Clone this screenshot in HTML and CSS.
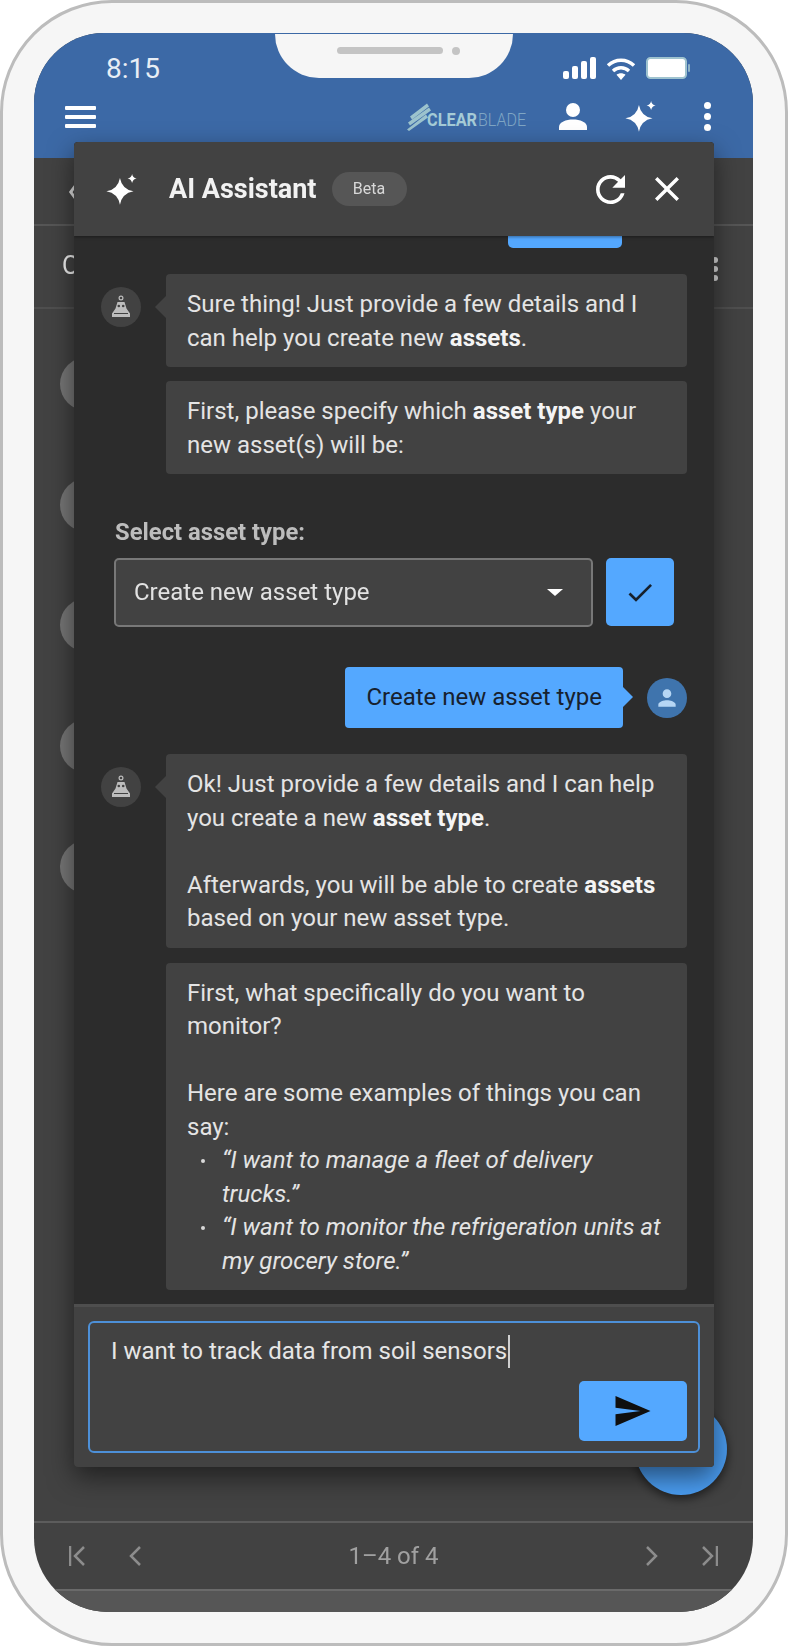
FILE: index.html
```html
<!DOCTYPE html>
<html lang="en">
<head>
<meta charset="utf-8">
<title>AI Assistant</title>
<link rel="stylesheet" href="styles.css">
</head>
<body>
<div class="phone">
  <div class="screen">
    <header class="appbar">
      <div class="status">
        <span class="time">8:15</span>
        <div class="status-icons">
          <svg class="ic-signal" viewBox="0 0 33 22"><rect x="0" y="14" width="6" height="8" rx="2"/><rect x="9" y="9" width="6" height="13" rx="2"/><rect x="18" y="4" width="6" height="18" rx="2"/><rect x="27" y="0" width="6" height="22" rx="2"/></svg>
          <svg class="ic-wifi" viewBox="0 0 30 23"><path class="wifi-arc" d="M2 8.500c7.500-7 18.500-7 26 0M7 14c4.700-4.200 11.300-4.200 16 0"/><path class="wifi-dot" d="M15 23l-4.500-5.200c2.700-2 6.300-2 9 0z"/></svg>
          <svg class="ic-battery" viewBox="0 0 44 22"><rect class="bat-shell" x="1" y="1" width="39" height="20" rx="3.500"/><rect class="bat-cap" x="42" y="7" width="2" height="8" rx="1"/></svg>
        </div>
      </div>
      <div class="toolbar">
        <div class="hamburger"><i></i><i></i><i></i></div>
        <div class="toolbar-right">
          <svg class="logo" viewBox="0 0 120 28"><path class="logo-mark" d="M3 14 20 1l2 3L5 17zM1 20 22 5l2 3L3 23zM0 27 19 12l2 3L2 28.500z"/><text class="logo-a" x="20" y="23" textLength="50" lengthAdjust="spacingAndGlyphs">CLEAR</text><text class="logo-b" x="71" y="23" textLength="48" lengthAdjust="spacingAndGlyphs">BLADE</text></svg>
          <svg class="ic-person" viewBox="0 0 28 27"><circle cx="14" cy="7" r="7"/><path d="M0 27v-3c0-5 7-7.500 14-7.500S28 19 28 24v3z"/></svg>
          <svg class="ic-spark" viewBox="0 0 24 24"><path d="M10.800 3Q12.400 11.800 21.300 13.400 12.400 15 10.800 23.800 9.200 15 .3 13.400 9.200 11.800 10.800 3zM20.200 0Q20.700 2.800 23.700 3.500 20.700 4.200 20.200 7 19.700 4.200 16.700 3.500 19.700 2.800 20.200 0z"/></svg>
          <div class="kebab"><i></i><i></i><i></i></div>
        </div>
      </div>
    </header>
    <div class="subheader"><span class="back">‹</span></div>
    <div class="listhead"><span class="listhead-title">Overview</span><div class="kebab kebab-dim"><i></i><i></i><i></i></div></div>
    <div class="list">
      <div class="row"><span class="disc"></span></div>
      <div class="row"><span class="disc"></span></div>
      <div class="row"><span class="disc"></span></div>
      <div class="row"><span class="disc"></span></div>
      <div class="row"><span class="disc"></span></div>
    </div>
    <div class="paginator">
      <div class="pager-group">
        <svg class="ic-page" viewBox="0 0 24 20"><path d="M1 0v20M15 1 6 10l9 9"/></svg>
        <svg class="ic-page ic-narrow" viewBox="0 0 14 20"><path d="M12 1 3 10l9 9"/></svg>
      </div>
      <span class="pager-text">1–4 of 4</span>
      <div class="pager-group">
        <svg class="ic-page ic-narrow" viewBox="0 0 14 20"><path d="M2 1l9 9-9 9"/></svg>
        <svg class="ic-page" viewBox="0 0 24 20"><path d="M23 0v20M9 1l9 9-9 9"/></svg>
      </div>
    </div>
    <div class="footer"></div>
  </div>

  <div class="notch"><span class="speaker"></span><span class="camera"></span></div>
  <span class="fab"></span>

  <section class="modal">
    <div class="modal-head">
      <svg class="ic-spark" viewBox="0 0 24 24"><path d="M10.800 3Q12.400 11.800 21.300 13.400 12.400 15 10.800 23.800 9.200 15 .3 13.400 9.200 11.800 10.800 3zM20.200 0Q20.700 2.800 23.700 3.500 20.700 4.200 20.200 7 19.700 4.200 16.700 3.500 19.700 2.800 20.200 0z"/></svg>
      <h1 class="modal-title">AI Assistant</h1>
      <span class="beta">Beta</span>
      <svg class="ic-refresh" viewBox="4 4 16 16"><path d="M17.650 6.350C16.200 4.900 14.210 4 12 4c-4.420 0-7.990 3.580-7.990 8s3.570 8 7.990 8c3.730 0 6.840-2.550 7.730-6h-2.080c-.82 2.330-3.040 4-5.650 4-3.310 0-6-2.690-6-6s2.690-6 6-6c1.660 0 3.140.69 4.220 1.780L13 11h7V4l-2.350 2.350z"/></svg>
      <svg class="ic-close" viewBox="5 5 14 14"><path d="M19 6.410 17.590 5 12 10.590 6.410 5 5 6.410 10.590 12 5 17.590 6.410 19 12 13.410 17.590 19 19 17.590 13.410 12z"/></svg>
    </div>

    <div class="chat">
      <div class="stub"></div>

      <div class="msg msg-first">
        <span class="avatar"><svg class="ic-bot" viewBox="0 0 24 24"><circle class="bot-top" cx="12" cy="3" r="1.900"/><path d="M8.500 7h7l2 6.500 3.500 5V22H3v-3.500l3.500-5z"/><circle class="bot-eye" cx="9.800" cy="11" r="1.300"/><circle class="bot-eye" cx="14.200" cy="11" r="1.300"/><rect class="bot-eye" x="5" y="18" width="14" height="1"/></svg></span>
        <div class="stack">
          <div class="bubble bubble-tail">Sure thing! Just provide a few details and I can help you create new <b>assets</b>.</div>
          <div class="bubble">First, please specify which <b>asset type</b> your new asset(s) will be:</div>
        </div>
      </div>

      <div class="picker">
        <div class="picker-label">Select asset type:</div>
        <div class="picker-row">
          <div class="select"><span>Create new asset type</span><i class="caret-down"></i></div>
          <button class="confirm"><svg class="ic-check" viewBox="3 5 18 14"><path d="M9 16.170 4.830 12l-1.420 1.410L9 19 21 7l-1.410-1.410z"/></svg></button>
        </div>
      </div>

      <div class="msg msg-user">
        <div class="bubble-user">Create new asset type</div>
        <span class="avatar avatar-user"><svg class="ic-user" viewBox="0 0 24 24"><path d="M12 12c2.210 0 4-1.790 4-4s-1.790-4-4-4-4 1.790-4 4 1.790 4 4 4zm0 2c-2.670 0-8 1.340-8 4v2h16v-2c0-2.660-5.330-4-8-4z"/></svg></span>
      </div>

      <div class="msg msg-bot2">
        <span class="avatar"><svg class="ic-bot" viewBox="0 0 24 24"><circle class="bot-top" cx="12" cy="3" r="1.900"/><path d="M8.500 7h7l2 6.500 3.500 5V22H3v-3.500l3.500-5z"/><circle class="bot-eye" cx="9.800" cy="11" r="1.300"/><circle class="bot-eye" cx="14.200" cy="11" r="1.300"/><rect class="bot-eye" x="5" y="18" width="14" height="1"/></svg></span>
        <div class="stack">
          <div class="bubble bubble-tail">
            <p>Ok! Just provide a few details and I can help you create a new <b>asset type</b>.</p>
            <p class="para">Afterwards, you will be able to create <b>assets</b> based on your new asset type.</p>
          </div>
          <div class="bubble">
            <p>First, what specifically do you want to monitor?</p>
            <p class="para">Here are some examples of things you can say:</p>
            <ul class="examples">
              <li>“I want to manage a fleet of delivery trucks.”</li>
              <li>“I want to monitor the refrigeration units at my grocery store.”</li>
            </ul>
          </div>
        </div>
      </div>
    </div>

    <div class="composer">
      <div class="input">
        <div class="input-text">I want to track data from soil sensors<span class="text-caret"></span></div>
        <button class="send"><svg class="ic-send" viewBox="2 3 21 18"><path d="M2.010 21 23 12 2.010 3 2 10l15 2-15 2z"/></svg></button>
      </div>
    </div>
  </section>
</div>
</body>
</html>
```
FILE: styles.css
```css
* { box-sizing: border-box; }
html, body { margin: 0; padding: 0; background: #fff; }
body { font-family: Roboto, "Liberation Sans", sans-serif; color: #e2e2e2; }

.phone {
  position: relative;
  width: 788px;
  height: 1646px;
  padding: 30px 32px 31px 31px;
  background: #f6f6f6;
  border: 3px solid #bcbcbc;
  border-radius: 112px;
  overflow: hidden;
  filter: blur(.4px);
}
.screen {
  display: flex;
  flex-direction: column;
  height: 100%;
  background: #424242;
  border-radius: 70px 70px 74px 74px;
  overflow: hidden;
}

/* app bar */
.appbar { flex: 0 0 125px; background: #3c69a6; }
.status { height: 60px; display: flex; justify-content: space-between; padding: 18px 63px 0 72px; }
.time { font-size: 28px; line-height: 36px; color: #e8eef5; }
.status-icons { display: flex; gap: 10px; align-items: flex-start; padding-top: 6px; }
.ic-signal { width: 33px; height: 22px; fill: #fff; }
.ic-wifi { width: 30px; height: 23px; }
.wifi-arc { fill: none; stroke: #fff; stroke-width: 3.500; }
.wifi-dot { fill: #fff; }
.ic-battery { width: 44px; height: 22px; }
.bat-shell { fill: #fff; stroke: #9fc3cf; stroke-width: 2; }
.bat-cap { fill: #8fb3c6; }

.toolbar { height: 47px; display: flex; justify-content: space-between; align-items: center; padding: 0 42px 0 31px; }
.hamburger { display: flex; flex-direction: column; gap: 5px; width: 31px; }
.hamburger i { display: block; height: 4px; background: #fff; border-radius: 1px; }
.toolbar-right { display: flex; align-items: center; }
.logo { width: 120px; height: 29px; margin-right: 32px; overflow: visible; }
.logo-mark { fill: #9cc3cd; }
.logo-a { font: 700 18px Roboto, sans-serif; fill: #a5cbd6; }
.logo-b { font: 300 18px Roboto, sans-serif; fill: #7fa6c4; }
.ic-person { width: 28px; height: 27px; fill: #fff; margin-right: 38px; }
.ic-spark { width: 31px; height: 31px; fill: #fff; }
.kebab { display: flex; flex-direction: column; gap: 4px; width: 7px; margin-left: 48px; }
.kebab i { display: block; width: 7px; height: 7px; border-radius: 50%; background: #fff; }

/* page behind the dialog */
.subheader { flex: 0 0 68px; border-bottom: 2px solid #565656; padding: 12px 0 0 33px; }
.back { font-size: 40px; line-height: 40px; color: #ddd; }
.listhead { flex: 0 0 83px; border-bottom: 2px solid #4f4f4f; display: flex; justify-content: space-between; padding: 20px 35px 0 28px; }
.listhead-title { font-size: 25px; line-height: 40px; color: #efefef; }
.kebab-dim { gap: 3px; width: 6px; margin: 11px 0 0; }
.kebab-dim i { width: 6px; height: 6px; background: #d8d8d8; }
.list { flex: 1 1 auto; padding-top: 15px; }
.row { height: 120.600px; display: flex; align-items: center; padding-left: 26px; }
.disc { width: 54px; height: 54px; border-radius: 50%; background: #757575; }

.paginator {
  flex: 0 0 70px;
  display: flex;
  align-items: center;
  justify-content: space-between;
  padding: 0 35px;
  border-top: 2px solid #5c5c5c;
  border-bottom: 2px solid #6a6a6a;
}
.pager-group { display: flex; align-items: center; gap: 35px; }
.pager-text { font-size: 24px; color: #a0a0a0; }
.ic-page { width: 24px; height: 20px; fill: none; stroke: #8c8c8c; stroke-width: 2.500; }
.ic-narrow { width: 14px; }
.footer { flex: 0 0 21px; background: #565656; }

/* overlays */
.notch {
  position: absolute;
  left: 272px;
  top: 31px;
  width: 238px;
  height: 44px;
  background: #f6f6f6;
  border-radius: 0 0 44px 44px;
}
.speaker { position: absolute; left: 62px; top: 13px; width: 106px; height: 7px; border-radius: 4px; background: #c4c4c4; }
.camera { position: absolute; left: 177px; top: 13px; width: 8px; height: 8px; border-radius: 50%; background: #c4c4c4; }
.fab {
  position: absolute;
  left: 632px;
  top: 1400px;
  width: 92px;
  height: 92px;
  border-radius: 50%;
  background: #4a9cf0;
  box-shadow: 0 4px 10px rgba(0,0,0,.5);
}

.modal {
  position: absolute;
  left: 71px;
  top: 139px;
  width: 640px;
  height: 1325px;
  display: flex;
  flex-direction: column;
  background: #2c2c2c;
  border-radius: 4px;
  overflow: hidden;
  box-shadow: 0 10px 26px rgba(0,0,0,.5);
}
.modal-head {
  flex: 0 0 94px;
  display: flex;
  align-items: center;
  padding: 0 35px 0 32px;
  background: #424242;
  box-shadow: 0 1px 3px rgba(0,0,0,.4);
  position: relative;
}
.modal-title { margin: 0 0 0 32px; font-size: 27px; font-weight: 700; color: #f2f2f2; white-space: nowrap; }
.beta { margin-left: 15px; width: 75px; height: 34px; border-radius: 17px; background: #565656; color: #d8d8d8; font-size: 16px; line-height: 34px; text-align: center; }
.ic-refresh { width: 29px; height: 29px; fill: #fff; margin-left: auto; }
.ic-close { width: 24px; height: 24px; fill: #fff; margin-left: 30px; }

/* chat */
.chat { flex: 1 1 auto; padding: 0 27px; font-size: 24px; line-height: 33.500px; overflow: hidden; }
.stub { width: 114px; height: 12px; margin-left: 407px; background: #54a8ff; border-radius: 0 0 5px 5px; }
.msg { display: flex; align-items: flex-start; }
.msg-first { margin-top: 26px; }
.msg-user { margin-top: 40px; justify-content: flex-end; align-items: center; }
.msg-bot2 { margin-top: 26px; }
.avatar { flex: 0 0 40px; width: 40px; height: 40px; margin-top: 13px; border-radius: 50%; background: #424242; display: flex; align-items: center; justify-content: center; }
.ic-bot { width: 24px; height: 24px; fill: #bdbdbd; }
.bot-top { fill: none; stroke: #bdbdbd; stroke-width: 1.200; }
.bot-eye { fill: #424242; }
.stack { flex: 1 1 auto; margin-left: 25px; display: flex; flex-direction: column; gap: 14px; }
.msg-bot2 .stack { gap: 15px; }
.bubble { position: relative; padding: 14px 21px 12px; background: #424242; border-radius: 4px; color: #e4e4e4; }
.bubble-tail::before {
  content: "";
  position: absolute;
  left: -11px;
  top: 22px;
  border-style: solid;
  border-width: 11px 11px 11px 0;
  border-color: transparent #424242 transparent transparent;
}
.bubble b { color: #f4f4f4; }
.bubble p { margin: 0; }
.bubble .para { margin-top: 33.500px; }
.examples { margin: 0; padding: 0 0 0 35px; font-style: italic; list-style: none; }
.examples li { position: relative; }
.examples li::before { content: ""; position: absolute; left: -21px; top: 15px; width: 4px; height: 4px; border-radius: 50%; background: #d8d8d8; }

.picker { margin: 46px 13px 0; }
.picker-label { font-size: 24px; font-size: 23.800px; font-weight: 700; line-height: 24px; color: #bdbdbd; margin-bottom: 14px; padding-left: 1px; }
.picker-row { display: flex; gap: 13px; }
.select {
  flex: 1 1 auto;
  height: 69px;
  display: flex;
  align-items: center;
  justify-content: space-between;
  padding: 0 28px 0 18px;
  background: #424242;
  border: 2px solid #787878;
  border-radius: 5px;
  color: #e2e2e2;
}
.caret-down { border-style: solid; border-width: 7px 8px 0; border-color: #fff transparent transparent; }
.confirm { flex: 0 0 68px; height: 68px; border: 0; padding: 0; background: #54a8ff; border-radius: 5px; display: flex; align-items: center; justify-content: center; }
.ic-check { width: 24px; height: 19px; fill: #16202c; }
.bubble-user {
  position: relative;
  height: 61px;
  padding: 14px 21px;
  background: #54a8ff;
  color: #17212e;
  border-radius: 4px;
  white-space: nowrap;
}
.bubble-user::after {
  content: "";
  position: absolute;
  right: -10px;
  top: 19px;
  border-style: solid;
  border-width: 11px 0 11px 11px;
  border-color: transparent transparent transparent #54a8ff;
}
.avatar-user { margin: 0 0 0 24px; background: #3f74ad; }
.ic-user { width: 26px; height: 26px; fill: #b6d6f4; }

/* composer */
.composer { flex: 0 0 161px; padding: 14px; background: #424242; border-top: 3px solid #4e4e4e; }
.input {
  height: 132px;
  display: flex;
  flex-direction: column;
  justify-content: space-between;
  padding: 12px 11px 10px 21px;
  border: 2px solid #4d90d8;
  border-radius: 6px;
}
.input-text { font-size: 24px; line-height: 33px; color: #e6e6e6; display: flex; align-items: center; white-space: pre; }
.text-caret { display: inline-block; width: 2px; height: 33px; margin-left: 1px; background: #cfcfcf; }
.send { align-self: flex-end; width: 108px; height: 60px; border: 0; padding: 0; background: #54a8ff; border-radius: 5px; display: flex; align-items: center; justify-content: center; }
.ic-send { width: 36px; height: 30px; fill: #0f0f0f; }
```
